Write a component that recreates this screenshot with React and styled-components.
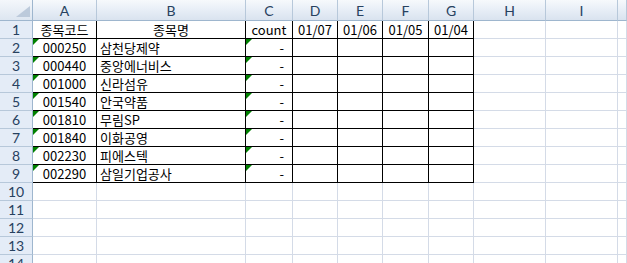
import React from "react";
import styled, { createGlobalStyle, css } from "styled-components";

const Global = createGlobalStyle`
  html, body { margin: 0; padding: 0; background: #ffffff; }
  body { width: 627px; height: 263px; overflow: hidden; }
`;

const GRID = "#d4dbe7";
const HEAD_LINE = "#9eb6ce";
const HEAD_SEP = "#b7c8da";

const Sheet = styled.div`
  display: grid;
  grid-template-columns: 33px 64px 149px 47px 45px 45px 46px 45px 72px 72px 1fr;
  grid-template-rows: 21px;
  grid-auto-rows: 18px;
  width: 627px;
  height: 263px;
  overflow: hidden;
  font-family: "Noto Sans CJK KR", "Noto Sans", sans-serif;
  font-size: 13px;
  color: #000;
`;

const Corner = styled.div`
  position: relative;
  box-sizing: border-box;
  background: linear-gradient(#f4f7fb, #dde6f1);
  border-right: 1px solid ${HEAD_LINE};
  border-bottom: 1px solid ${HEAD_LINE};
  &::after {
    content: "";
    position: absolute;
    right: 2px;
    bottom: 3px;
    width: 0;
    height: 0;
    border-left: 14px solid transparent;
    border-bottom: 11px solid #bccadb;
  }
`;

const ColHead = styled.div`
  box-sizing: border-box;
  display: flex;
  align-items: center;
  justify-content: center;
  background: linear-gradient(#f6f9fc 0%, #e9eff7 45%, #d9e3ef 100%);
  border-right: 1px solid ${HEAD_SEP};
  border-bottom: 1px solid ${HEAD_LINE};
  font-family: "Lato", "Open Sans", sans-serif;
  font-size: 14px;
  color: #27415f;
  padding-top: 1px;
`;

const RowHead = styled.div`
  box-sizing: border-box;
  display: flex;
  align-items: center;
  justify-content: center;
  background: #e4ecf7;
  border-right: 1px solid ${HEAD_LINE};
  border-bottom: 1px solid ${HEAD_SEP};
  font-family: "Lato", "Open Sans", sans-serif;
  font-size: 14px;
  color: #27415f;
`;

const Cell = styled.div`
  position: relative;
  box-sizing: border-box;
  display: flex;
  align-items: center;
  white-space: nowrap;
  overflow: visible;
  line-height: 17px;
  border-right: 1px solid ${(p) => (p.$boxed ? "#000" : GRID)};
  border-bottom: 1px solid ${(p) => (p.$boxed ? "#000" : GRID)};
  justify-content: ${(p) =>
    p.$align === "left" ? "flex-start" : p.$align === "right" ? "flex-end" : "center"};
  padding: ${(p) =>
    p.$align === "left" ? "0 0 0 3px" : p.$align === "right" ? "0 8px 0 0" : "0"};
  ${(p) =>
    p.$flag &&
    css`
      &::before {
        content: "";
        position: absolute;
        left: 0;
        top: 0;
        width: 0;
        height: 0;
        border-top: 6px solid #008000;
        border-right: 6px solid transparent;
      }
    `}
`;

const columns = ["A", "B", "C", "D", "E", "F", "G", "H", "I", ""];

const data = [
  ["000250", "삼천당제약"],
  ["000440", "중앙에너비스"],
  ["001000", "신라섬유"],
  ["001540", "안국약품"],
  ["001810", "무림SP"],
  ["001840", "이화공영"],
  ["002230", "피에스텍"],
  ["002290", "삼일기업공사"],
];

const headerRow = [
  { t: "종목코드", a: "center" },
  { t: "종목명", a: "center" },
  { t: "count", a: "center" },
  { t: "01/07", a: "center" },
  { t: "01/06", a: "center" },
  { t: "01/05", a: "center" },
  { t: "01/04", a: "center" },
];

export default function App() {
  const rows = [];
  // row 1
  rows.push(<RowHead key="rh1">1</RowHead>);
  headerRow.forEach((c, i) =>
    rows.push(
      <Cell key={`r1c${i}`} $boxed $align={c.a}>
        {c.t}
      </Cell>
    )
  );
  for (let i = 0; i < 3; i++) rows.push(<Cell key={`r1e${i}`} />);

  data.forEach(([code, name], r) => {
    const n = r + 2;
    rows.push(<RowHead key={`rh${n}`}>{n}</RowHead>);
    rows.push(
      <Cell key={`r${n}a`} $boxed $flag $align="center">
        {code}
      </Cell>
    );
    rows.push(
      <Cell key={`r${n}b`} $boxed $align="left">
        {name}
      </Cell>
    );
    rows.push(
      <Cell key={`r${n}c`} $boxed $flag $align="right">
        -
      </Cell>
    );
    for (let i = 0; i < 4; i++) rows.push(<Cell key={`r${n}d${i}`} $boxed />);
    for (let i = 0; i < 3; i++) rows.push(<Cell key={`r${n}e${i}`} />);
  });

  for (let n = 10; n <= 14; n++) {
    rows.push(<RowHead key={`rh${n}`}>{n}</RowHead>);
    for (let i = 0; i < 10; i++) rows.push(<Cell key={`r${n}x${i}`} />);
  }

  return (
    <>
      <Global />
      <Sheet>
        <Corner />
        {columns.map((c, i) => (
          <ColHead key={`ch${i}`}>{c}</ColHead>
        ))}
        {rows}
      </Sheet>
    </>
  );
}
